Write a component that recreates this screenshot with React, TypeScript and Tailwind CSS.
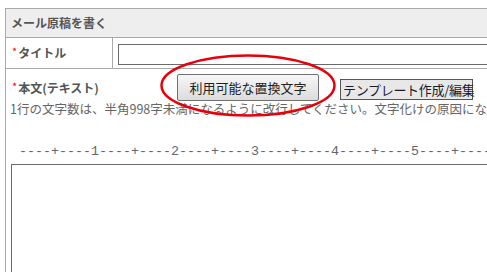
const jp = "font-['Noto_Sans_CJK_JP','Noto_Sans',sans-serif]";

function Req() {
  return <span className="text-[#f00] font-normal text-[11px] relative -top-[2px] mr-[1px]">*</span>;
}

export default function App() {
  const ruler = "----+----1----+----2----+----3----+----4----+----5----+----6----+----7";

  return (
    <div className={`relative w-[487px] h-[272px] overflow-hidden bg-white pt-[8px] pl-[5px] ${jp}`}>
      <div className="w-[640px] border border-[#aaa] border-b-0">
        {/* header */}
        <div className="h-[29px] bg-[#eee] border-b border-[#aaa] pl-[5px] flex items-center text-[12px] font-bold text-[#555]">
          メール原稿を書く
        </div>

        {/* title row */}
        <div className="flex h-[31px] border-b border-[#aaa]">
          <div className="w-[107px] border-r border-[#aaa] pl-[6px] flex items-center text-[12px] font-bold text-[#555]">
            <Req />
            タイトル
          </div>
          <div className="flex-1 pl-[5px] pt-[4px]">
            <input className="w-full h-[21px] border border-[#6b6b6b] bg-white outline-none" />
          </div>
        </div>

        {/* body */}
        <div className="pl-[5px] pt-[5px]">
          <div className="flex items-center h-[27px]">
            <div className="w-[166px] pl-[1px] text-[12px] font-bold text-[#555]">
              <Req />
              本文(テキスト)
            </div>
            <button className="w-[142px] h-[27px] border border-[#707070] rounded-[2px] bg-gradient-to-b from-[#f7f7f7] to-[#dcdcdc] text-[13px] text-[#222]">
              利用可能な置換文字
            </button>
            <button className="ml-[21px] mt-[3px] w-[133px] h-[21px] border border-[#555] bg-[#e8e8e8] text-[13px] leading-none text-[#1a1a2a] tracking-[-0.3px] px-[2px] whitespace-nowrap">
              テンプレート作成/編集
            </button>
          </div>
          <div className="h-[16px] leading-[16px] text-[12.5px] text-[#666] whitespace-nowrap -ml-[1px]">
            1行の文字数は、半角998字未満になるように改行してください。文字化けの原因になりますので、ご注意ください。
          </div>
          <div className="mt-[27px] h-[16px] leading-[16px] pl-[8px] font-['Liberation_Mono',monospace] text-[13.33px] text-[#666] whitespace-pre">
            {ruler}
          </div>
          <div className="mt-[4px] h-[140px] border border-[#6b6b6b] border-r-0" />
        </div>
      </div>

      {/* red annotation ellipse */}
      <svg className="absolute left-0 top-0 pointer-events-none" width="487" height="272">
        <ellipse cx="248" cy="85.5" rx="86.5" ry="30" fill="none" stroke="#e8000b" strokeWidth="2.5" />
      </svg>
    </div>
  );
}
